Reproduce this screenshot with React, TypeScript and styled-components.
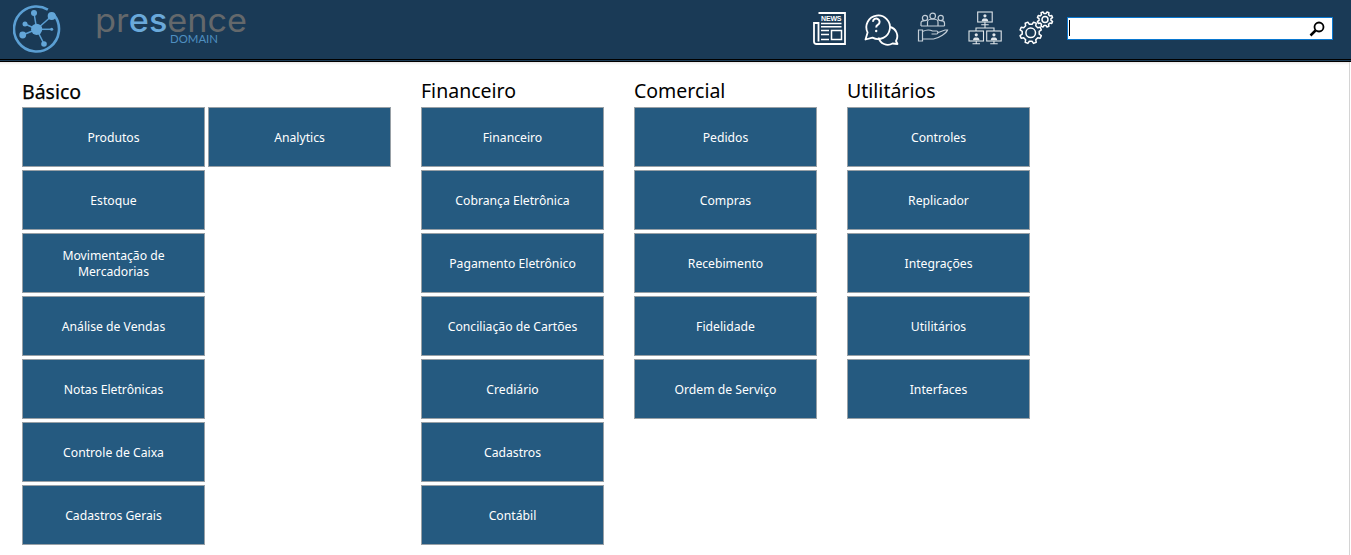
import React from 'react';
import styled, {createGlobalStyle} from 'styled-components';

const GlobalStyle = createGlobalStyle`
  html, body {
    margin: 0;
    padding: 0;
    background: white;
    overflow: hidden;
  }
  * {
    box-sizing: border-box;
  }
`;

const Page = styled.div`
  width: 1351px;
  height: 555px;
  overflow: hidden;
  font-family: "Noto Sans", "DejaVu Sans", sans-serif;
`;
const TopBar = styled.header`
  height: 59px;
  background: #1a3a56;
  display: flex;
  align-items: center;
  justify-content: space-between;
  padding: 0 18px 1px 13px;
`;
const Rule = styled.div`
  height: 3px;
  background: #1d3c55;
  border-top: 1px solid #000;
  border-bottom: 1px solid #000;
`;
const Brand = styled.div`
  display: flex;
  align-items: center;
  gap: 32px;
`;
const BrandArt = styled.svg`
  display: block;
  height: 58px;
`;
const Tools = styled.div`
  display: flex;
  align-items: center;
`;
const ToolIcon = styled.svg<{$gap?: number; $width?: number}>`
  display: block;
  width: 34px;
  height: 34px;
  overflow: visible;
  margin-right: ${p => p.$gap ?? 17}px;
  fill: none;
  stroke: ${p => p.color || '#fff'};
  stroke-width: ${p => p.$width ?? 1.7};
`;
const SearchBox = styled.div`
  position: relative;
  width: 266px;
  height: 23px;
  margin-bottom: 1px;
  background: #fff;
  border: 1px solid #0a78d0;
  display: flex;
  align-items: center;
  justify-content: flex-end;
  padding-right: 7px;
`;
const Caret = styled.span`
  position: absolute;
  left: 1px;
  top: 2px;
  width: 1px;
  height: 16px;
  background: #000;
`;
const Main = styled.main`
  width: 1350px;
  height: 493px;
  display: flex;
  gap: 30px;
  padding: 16px 0 0 22px;
  border-right: 1px solid #d4d4d4;
  background: linear-gradient(#e9e9e9, #fff 3px);
`;
const Section = styled.section``;
const Title = styled.h2<{$dark?: boolean}>`
  margin: 0;
  height: 29px;
  padding-top: ${p => (p.$dark ? 1 : 0)}px;
  font-size: 19.5px;
  line-height: 25px;
  font-weight: 400;
  color: #000;
  -webkit-text-stroke: ${p => (p.$dark ? '0.25px #000' : '0')};
`;
const TileColumns = styled.div`
  display: flex;
  gap: 3px;
`;
const TileStack = styled.div`
  display: flex;
  flex-direction: column;
  gap: 3px;
`;
const Tile = styled.div`
  width: 183px;
  height: 60px;
  display: flex;
  align-items: center;
  justify-content: center;
  padding: 1px 24px 0;
  text-align: center;
  background: #255a80;
  border: 1px solid #98a0a6;
  color: #fff;
  font-size: 12.2px;
  line-height: 16px;
`;

function Logo() {
	return (
		<BrandArt width="50" viewBox="13 0 50 58">
			<circle cx="36.5" cy="29" r="22.5" fill="none" stroke="#5b9fd3" strokeWidth="2.6" strokeDasharray="132 9.4" transform="rotate(-38 36.5 29)"/>
			<g stroke="#5b9fd3" strokeWidth="1.5">
				<line x1="36.7" y1="29.3" x2="34" y2="13"/>
				<line x1="36.7" y1="29.3" x2="51.7" y2="16"/>
				<line x1="36.7" y1="29.3" x2="25" y2="24"/>
				<line x1="36.7" y1="29.3" x2="22.7" y2="35"/>
				<line x1="36.7" y1="29.3" x2="44" y2="44"/>
				<line x1="36.7" y1="29.3" x2="51.7" y2="29.3"/>
			</g>
			<g fill="#63a6d8">
				<circle cx="36.7" cy="29.3" r="5.6"/>
				<circle cx="34" cy="13" r="3"/>
				<circle cx="51.7" cy="16" r="4"/>
				<circle cx="25" cy="24" r="2.5"/>
				<circle cx="22.7" cy="35" r="3.4"/>
				<circle cx="44" cy="44" r="2.8"/>
				<circle cx="51.7" cy="29.3" r="1.5"/>
			</g>
		</BrandArt>
	);
}

function Wordmark() {
	return (
		<BrandArt width="156" viewBox="95 0 156 58">
			<text x="95" y="32" fontFamily="Inter, sans-serif" fontSize="32" fontWeight="400" textLength="152" lengthAdjust="spacingAndGlyphs" fill="#64686b">
				pr<tspan fill="#6aa9da" fontWeight="500">es</tspan>ence
			</text>
			<text x="170" y="43" fontFamily="Lato, sans-serif" fontSize="11.5" textLength="48" lengthAdjust="spacingAndGlyphs" fill="#4f8fc0">DOMAIN</text>
		</BrandArt>
	);
}

function NewsIcon() {
	return (
		<ToolIcon viewBox="0 0 34 34" $width={1.8}>
			<path d="M5.5 1h26.500v31H3.500a2.500 2.500 0 0 1-2.500-2.500V11h4.500v18.500"/>
			<text x="8" y="9" fontFamily="Liberation Sans, sans-serif" fontSize="7" fontWeight="700" textLength="20.5" fill="#fff" stroke="none">NEWS</text>
			<path d="M8 11.500h20.500M8 14.800h20.500M8 18.500h8M8 22.500h8M8 27.500h8" strokeWidth="1.4"/>
			<rect x="18.5" y="18.5" width="10" height="9" strokeWidth="1.5"/>
		</ToolIcon>
	);
}

function HelpIcon() {
	return (
		<ToolIcon viewBox="0 0 34 34" $gap={19} $width={1.8}>
			<path d="M3.600 20.500A11.800 11.800 0 1 1 8.500 25.600L1.500 27.500Z" strokeLinejoin="round"/>
			<path d="M26 15a9.500 9.500 0 0 1 6 14l1.500 3-5-.5a9.500 9.500 0 0 1-14-6" strokeLinejoin="round"/>
			<path d="M9 9.800a3.300 3.300 0 1 1 5 2.900c-1.200.7-1.800 1.200-1.800 2.800" strokeWidth="2"/>
			<circle cx="12.2" cy="19" r="1.2" fill="#fff" stroke="none"/>
		</ToolIcon>
	);
}

function CareIcon() {
	return (
		<ToolIcon viewBox="0 0 34 34" color="#c3ced8" $width={1.2}>
			<circle cx="8" cy="6" r="2.6"/>
			<circle cx="15.7" cy="4" r="2.8"/>
			<circle cx="23.7" cy="6" r="2.6"/>
			<path d="M4 14v-3c0-1.600 1.500-2.300 3.500-2.300M27.500 14v-3c0-1.600-1.500-2.300-3.500-2.300M10.500 14v-4c0-2 2.500-3 5.200-3s5.300 1 5.300 3v4zM4 14h6.500M21 14h6.500"/>
			<path d="M1.500 18h4v11h-4zM5.500 19.500c4-2 7-2 10-.5h4c2 0 2 3 0 3h-5M20 21l8-3h2.500c-1 3-8 8-14 9H5.500"/>
		</ToolIcon>
	);
}

function Monitor({x, y}: {x: number; y: number}) {
	return (
		<g transform={`translate(${x} ${y})`}>
			<rect x="0" y="0" width="14.5" height="10"/>
			<circle cx="7.25" cy="3.8" r="1.6" fill="#dfe5ea" stroke="none"/>
			<path d="M4 9.300c0-2.300 1.200-2.800 3.250-2.800s3.250.5 3.250 2.800z" fill="#dfe5ea" stroke="none"/>
			<path d="M7.250 10v2.500M3.500 12.800h7.500"/>
		</g>
	);
}

function NetworkIcon() {
	return (
		<ToolIcon viewBox="0 0 34 34" color="#dfe5ea" $width={1.1}>
			<Monitor x={9.7} y={0}/>
			<Monitor x={1} y={19}/>
			<Monitor x={18.7} y={19}/>
			<path d="M17 13v3M8 19v-3h18v3"/>
		</ToolIcon>
	);
}

function gearPath(cx: number, cy: number, outer: number, inner: number, teeth: number) {
	const points: string[] = [];
	const step = (Math.PI * 2) / teeth;
	for(let i = 0; i < teeth; i++) {
		const a = i * step + step / 2;
		[[-0.3, inner], [-0.17, outer], [0.17, outer], [0.3, inner]].forEach(([f, r]) => {
			points.push(`${(cx + Math.cos(a + f * step) * r).toFixed(2)} ${(cy + Math.sin(a + f * step) * r).toFixed(2)}`);
		});
	}
	return `M${points.join('L')}Z`;
}

function GearsIcon() {
	return (
		<ToolIcon viewBox="0 0 34 34" $gap={14} $width={1.5}>
			<path d={gearPath(11.7, 20.8, 11, 8.6, 8)} strokeLinejoin="round"/>
			<circle cx="11.7" cy="20.8" r="4.8"/>
			<path d={gearPath(26, 7.5, 7.8, 6, 8)} strokeLinejoin="round"/>
			<circle cx="26" cy="7.5" r="3"/>
		</ToolIcon>
	);
}

const basicoA = ['Produtos', 'Estoque', 'Movimentação de Mercadorias', 'Análise de Vendas', 'Notas Eletrônicas', 'Controle de Caixa', 'Cadastros Gerais'];
const sections = [
	{title: 'Financeiro', items: ['Financeiro', 'Cobrança Eletrônica', 'Pagamento Eletrônico', 'Conciliação de Cartões', 'Crediário', 'Cadastros', 'Contábil']},
	{title: 'Comercial', items: ['Pedidos', 'Compras', 'Recebimento', 'Fidelidade', 'Ordem de Serviço']},
	{title: 'Utilitários', items: ['Controles', 'Replicador', 'Integrações', 'Utilitários', 'Interfaces']},
];

function App() {
	return (
		<Page>
			<GlobalStyle/>
			<TopBar>
				<Brand>
					<Logo/>
					<Wordmark/>
				</Brand>
				<Tools>
					<NewsIcon/>
					<HelpIcon/>
					<CareIcon/>
					<NetworkIcon/>
					<GearsIcon/>
					<SearchBox>
						<Caret/>
						<svg width="16" height="16" viewBox="0 0 16 16" fill="none" stroke="#000">
							<circle cx="10" cy="6" r="4.5" strokeWidth="1.8"/>
							<path d="M6.500 9.500L1.500 14.500" strokeWidth="2.5"/>
						</svg>
					</SearchBox>
				</Tools>
			</TopBar>
			<Rule/>
			<Main>
				<Section>
					<Title $dark>Básico</Title>
					<TileColumns>
						<TileStack>
							{basicoA.map(item => <Tile key={item}>{item}</Tile>)}
						</TileStack>
						<TileStack>
							<Tile>Analytics</Tile>
						</TileStack>
					</TileColumns>
				</Section>
				{sections.map(section =>
					<Section key={section.title}>
						<Title>{section.title}</Title>
						<TileStack>
							{section.items.map(item => <Tile key={item}>{item}</Tile>)}
						</TileStack>
					</Section>
				)}
			</Main>
		</Page>
	);
}

export default App;
